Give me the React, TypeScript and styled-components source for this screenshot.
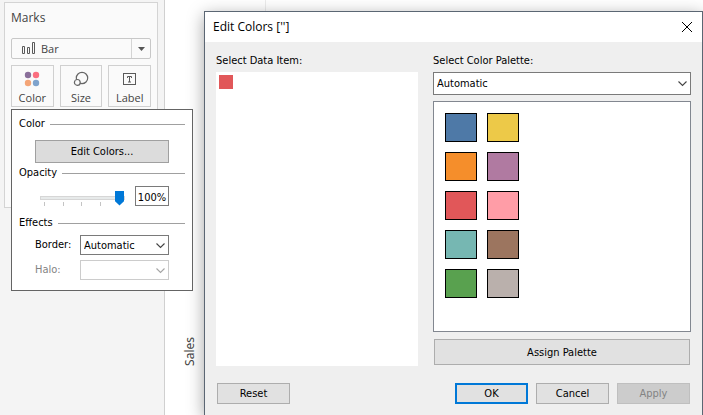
import React from 'react';
import styled, { createGlobalStyle, css } from 'styled-components';

const uiFont = '"DejaVu Sans Condensed", "DejaVu Sans", sans-serif';
const bookFont = '"Open Sans", "Noto Sans", sans-serif';

const GlobalStyle = createGlobalStyle`
  *, *::before, *::after { box-sizing: border-box; }
  body { margin: 0; background: #fff; }
  button, input, select { font: inherit; color: inherit; margin: 0; border-radius: 0; }
`;

const Screen = styled.div`
  position: relative;
  display: flex;
  height: 100vh;
  overflow: hidden;
  font: 11px/16px ${uiFont};
  color: #000;
`;

const Sidebar = styled.aside`
  flex: 0 0 165px;
  padding: 2px 6px 0 4px;
  background: #f4f4f4;
  border-right: 1px solid #d0d0d0;
`;

const MarksCard = styled.section`
  min-height: 206px;
  padding: 7px 6px;
  background: #fafafa;
  border: 1px solid #d4d4d4;
  font-family: ${bookFont};
  color: #444;
`;

const MarksTitle = styled.h2`
  margin: 0 0 12px;
  font-size: 12px;
  line-height: 16px;
  font-weight: 400;
`;

const MarkType = styled.button`
  display: flex;
  align-items: center;
  width: 100%;
  height: 21px;
  padding: 0 0 0 10px;
  background: #fafafa;
  border: 1px solid #c8c8c8;
  border-radius: 2px;
`;

const MarkName = styled.span`
  flex: 1;
  padding-left: 5px;
  text-align: left;
`;

const MarkArrow = styled.span`
  display: grid;
  place-items: center;
  width: 19px;
  height: 100%;
  border-left: 1px solid #d4d4d4;
`;

const MarkButtons = styled.div`
  display: grid;
  grid-template-columns: repeat(3, 1fr);
  gap: 6px;
  margin-top: 6px;
`;

const MarkButton = styled.button`
  display: flex;
  flex-direction: column;
  align-items: center;
  height: 42px;
  padding: 5px 0 0;
  gap: 3px;
  background: #fafafa;
  border: 1px solid #d0d0d0;
`;

const Sheet = styled.main`
  flex: 1;
  display: flex;
  align-items: flex-end;
  background: linear-gradient(90deg, transparent 100px, #ececec 100px, #ececec 101px, transparent 101px);
`;

const AxisTitle = styled.span`
  margin: 0 0 49px 17px;
  font: 12px/16px "Noto Sans", sans-serif;
  color: #444;
  writing-mode: vertical-rl;
  transform: rotate(180deg);
`;

const ColorPopup = styled.section`
  position: absolute;
  left: 11px;
  top: 109px;
  width: 182px;
  padding: 6px 7px 10px;
  background: #fff;
  border: 1px solid #646464;
`;

const Heading = styled.h3`
  display: flex;
  align-items: center;
  gap: 5px;
  margin: 0;
  font-size: 11px;
  line-height: 16px;
  font-weight: 400;

  &::after {
    content: '';
    flex: 1;
    height: 1px;
    background: #a0a0a0;
  }
`;

const PopupRow = styled.div<{ $above: number; $below?: number }>`
  display: flex;
  align-items: center;
  justify-content: space-between;
  margin: ${p => p.$above}px 16px ${p => p.$below ?? 0}px;
`;

type ButtonKind = 'plain' | 'primary' | 'popup';

const PushButton = styled.button<{ $kind?: ButtonKind; $tall?: boolean }>`
  min-width: 73px;
  height: ${p => (p.$tall ? 26 : 21)}px;
  padding: 1px 0 0;
  background: #e1e1e1;
  border: 1px solid #adadad;
  ${p => p.$kind === 'primary' && css`border: 2px solid #0078d7;`}
  ${p => p.$kind === 'popup' && css`
    flex: 1;
    height: 23px;
    padding: 0;
    background: #dcdcdc;
    border-color: #a0a0a0;
  `}
  &:disabled {
    background: #ccc;
    border-color: #bfbfbf;
    color: #838383;
  }
`;

const OpacityRow = styled.div`
  display: flex;
  justify-content: space-between;
  margin: 5px 16px 9px 21px;
`;

const SliderBox = styled.div`
  width: 85px;
  height: 20px;
  padding-top: 4px;
`;

const Slider = styled.input`
  display: block;
  appearance: none;
  width: 100%;
  height: 15px;
  background: transparent;

  &::-webkit-slider-runnable-track {
    height: 4px;
    background: #e7eaea;
    border: 1px solid #d6d6d6;
  }
  &::-webkit-slider-thumb {
    appearance: none;
    width: 9px;
    height: 15px;
    margin-top: -6px;
    background: #0078d7;
    clip-path: polygon(0 0, 100% 0, 100% 72%, 50% 100%, 0 72%);
  }
`;

const Ticks = styled.div`
  display: flex;
  justify-content: space-between;
  width: 61px;
  padding-left: 4px;
  margin-top: -3px;

  & > span {
    width: 1px;
    height: 4px;
    background: #c4c4c4;
  }
`;

const PercentInput = styled.input`
  width: 34px;
  height: 20px;
  padding: 2px 0 0;
  border: 1px solid #7a7a7a;
  background: #fff;
  text-align: center;
`;

const FieldLabel = styled.label<{ $off?: boolean }>`
  color: ${p => (p.$off ? '#838383' : '#000')};
`;

const SelectFrame = styled.div<{ $width?: string }>`
  display: grid;
  align-items: center;
  width: ${p => p.$width ?? '100%'};

  & > * { grid-area: 1 / 1; }
  & > svg {
    justify-self: end;
    margin-right: 4px;
    pointer-events: none;
  }
`;

const SelectInput = styled.select<{ $height: number }>`
  appearance: none;
  width: 100%;
  height: ${p => p.$height}px;
  padding: 1px 16px 0 3px;
  background: #fff;
  border: 1px solid #7a7a7a;

  &:disabled {
    border-color: #ccc;
    opacity: 1;
  }
`;

const Dialog = styled.section`
  position: absolute;
  left: 204px;
  top: 11px;
  right: 0;
  bottom: 0;
  background: #efefef;
  border: 1px solid #5b6673;
  border-bottom: 0;
  box-shadow: 0 4px 16px rgba(0, 0, 0, 0.36);
`;

const TitleBar = styled.header`
  display: flex;
  align-items: center;
  justify-content: space-between;
  height: 30px;
  padding: 0 10px 0 8px;
  background: #fff;
`;

const DialogTitle = styled.h1`
  margin: 0;
  font: 400 12px/18px ${bookFont};
`;

const CloseButton = styled.button`
  display: grid;
  padding: 0;
  border: 0;
  background: none;
`;

const Columns = styled.div`
  display: grid;
  grid-template-columns: 202fr 258fr;
  gap: 15px;
  padding: 11px 11px 0;
`;

const Column = styled.div`
  display: flex;
  flex-direction: column;
`;

const ColumnLabel = styled.label`
  height: 19px;
`;

const ItemList = styled.ul`
  height: 294px;
  margin: 0;
  padding: 3px;
  background: #fff;
  list-style: none;
`;

const ItemSwatch = styled.button`
  display: block;
  width: 14px;
  height: 14px;
  padding: 0;
  border: 0;
  background: #e15759;
`;

const Palette = styled.div`
  display: grid;
  grid-template-columns: 32px 32px;
  grid-auto-rows: 29px;
  gap: 10px;
  height: 231px;
  margin: 6px 0 7px;
  padding: 11px;
  background: #fff;
  border: 1px solid #828790;
`;

const Swatch = styled.button<{ $color: string }>`
  padding: 0;
  border: 1px solid #000;
  background: ${p => p.$color};
`;

const AssignRow = styled.div`
  display: grid;
  padding: 0 1px;
`;

const Footer = styled.footer`
  display: flex;
  gap: 8px;
  padding: 17px 12px 11px;

  & > :first-child { margin-right: auto; }
`;

const Chevron = ({ off }: { off?: boolean }) => (
  <svg width="9" height="7" viewBox="0 0 9 7" fill="none" stroke={off ? '#a5a5a5' : '#444'} strokeWidth="1.1" aria-hidden="true">
    <path d="M.5 1.500 4.500 5.500 8.500 1.500" />
  </svg>
);

const BarIcon = () => (
  <svg width="14" height="13" viewBox="0 0 14 13" fill="none" stroke="#5a5a5a" aria-hidden="true">
    <path d="M.5 4.500h2v7h-2zM5.500 5.500h2v6h-2zM10.500.5h2v11h-2z" />
  </svg>
);

const ColorIcon = () => (
  <svg width="16" height="16" viewBox="0 0 16 16" aria-hidden="true">
    <circle cx="4" cy="4" r="3.200" fill="#8a6f9a" />
    <circle cx="12" cy="4" r="3.200" fill="#fb6f80" />
    <circle cx="4" cy="12" r="3.200" fill="#f4a577" />
    <circle cx="12" cy="12" r="3.200" fill="#7fa3cc" />
  </svg>
);

const SizeIcon = () => (
  <svg width="16" height="16" viewBox="0 0 16 16" stroke="#666" strokeWidth="1.200" aria-hidden="true">
    <circle cx="9" cy="7" r="5.700" fill="none" />
    <circle cx="4.300" cy="11.400" r="2.900" fill="#fafafa" />
  </svg>
);

const LabelIcon = () => (
  <svg width="16" height="16" viewBox="0 0 16 16" fill="none" stroke="#5a5a5a" aria-hidden="true">
    <rect x="1.500" y="2.500" width="12" height="11" />
    <path d="M5.500 7V5.500h4V7M7.500 5.500v5.500M6 11h3" />
  </svg>
);

const palette = [
  ['Blue', '#4e79a7'], ['Yellow', '#edc948'],
  ['Orange', '#f58e2b'], ['Purple', '#b07aa1'],
  ['Red', '#e15759'], ['Pink', '#ff9da7'],
  ['Teal', '#76b7b2'], ['Brown', '#9c755f'],
  ['Green', '#59a14f'], ['Gray', '#bab0ac'],
];

export default function App() {
  return (
    <>
      <GlobalStyle />
      <Screen>
        <Sidebar>
          <MarksCard>
            <MarksTitle>Marks</MarksTitle>
            <MarkType aria-haspopup="listbox">
              <BarIcon />
              <MarkName>Bar</MarkName>
              <MarkArrow>
                <svg width="7" height="4" viewBox="0 0 7 4" aria-hidden="true">
                  <path d="M0 0h7L3.500 4z" fill="#555" />
                </svg>
              </MarkArrow>
            </MarkType>
            <MarkButtons>
              <MarkButton><ColorIcon />Color</MarkButton>
              <MarkButton><SizeIcon />Size</MarkButton>
              <MarkButton><LabelIcon />Label</MarkButton>
            </MarkButtons>
          </MarksCard>
        </Sidebar>

        <Sheet>
          <AxisTitle>Sales</AxisTitle>
        </Sheet>

        <Dialog role="dialog" aria-labelledby="dialog-title">
          <TitleBar>
            <DialogTitle id="dialog-title">Edit Colors ['']</DialogTitle>
            <CloseButton aria-label="Close">
              <svg width="10" height="10" viewBox="0 0 10 10" stroke="#000" aria-hidden="true">
                <path d="M0 0 10 10M10 0 0 10" />
              </svg>
            </CloseButton>
          </TitleBar>
          <Columns>
            <Column>
              <ColumnLabel as="span" id="items-label">Select Data Item:</ColumnLabel>
              <ItemList aria-labelledby="items-label">
                <li><ItemSwatch aria-label="Data item" /></li>
              </ItemList>
            </Column>
            <Column>
              <ColumnLabel htmlFor="palette">Select Color Palette:</ColumnLabel>
              <SelectFrame>
                <SelectInput id="palette" $height={23}>
                  <option>Automatic</option>
                </SelectInput>
                <Chevron />
              </SelectFrame>
              <Palette>
                {palette.map(([name, color]) => (
                  <Swatch key={name} $color={color} aria-label={name} />
                ))}
              </Palette>
              <AssignRow>
                <PushButton $tall>Assign Palette</PushButton>
              </AssignRow>
            </Column>
          </Columns>
          <Footer>
            <PushButton>Reset</PushButton>
            <PushButton $kind="primary">OK</PushButton>
            <PushButton>Cancel</PushButton>
            <PushButton disabled>Apply</PushButton>
          </Footer>
        </Dialog>

        <ColorPopup aria-label="Color options">
          <Heading>Color</Heading>
          <PopupRow $above={8} $below={2}>
            <PushButton $kind="popup">Edit Colors...</PushButton>
          </PopupRow>
          <Heading>Opacity</Heading>
          <OpacityRow>
            <SliderBox>
              <Slider type="range" min={0} max={100} defaultValue={100} aria-label="Opacity" />
              <Ticks><span /><span /><span /><span /></Ticks>
            </SliderBox>
            <PercentInput defaultValue="100%" aria-label="Opacity percent" />
          </OpacityRow>
          <Heading>Effects</Heading>
          <PopupRow $above={4}>
            <FieldLabel htmlFor="border">Border:</FieldLabel>
            <SelectFrame $width="89px">
              <SelectInput id="border" $height={20}>
                <option>Automatic</option>
              </SelectInput>
              <Chevron />
            </SelectFrame>
          </PopupRow>
          <PopupRow $above={5}>
            <FieldLabel htmlFor="halo" $off>Halo:</FieldLabel>
            <SelectFrame $width="89px">
              <SelectInput id="halo" $height={20} disabled />
              <Chevron off />
            </SelectFrame>
          </PopupRow>
        </ColorPopup>
      </Screen>
    </>
  );
}
